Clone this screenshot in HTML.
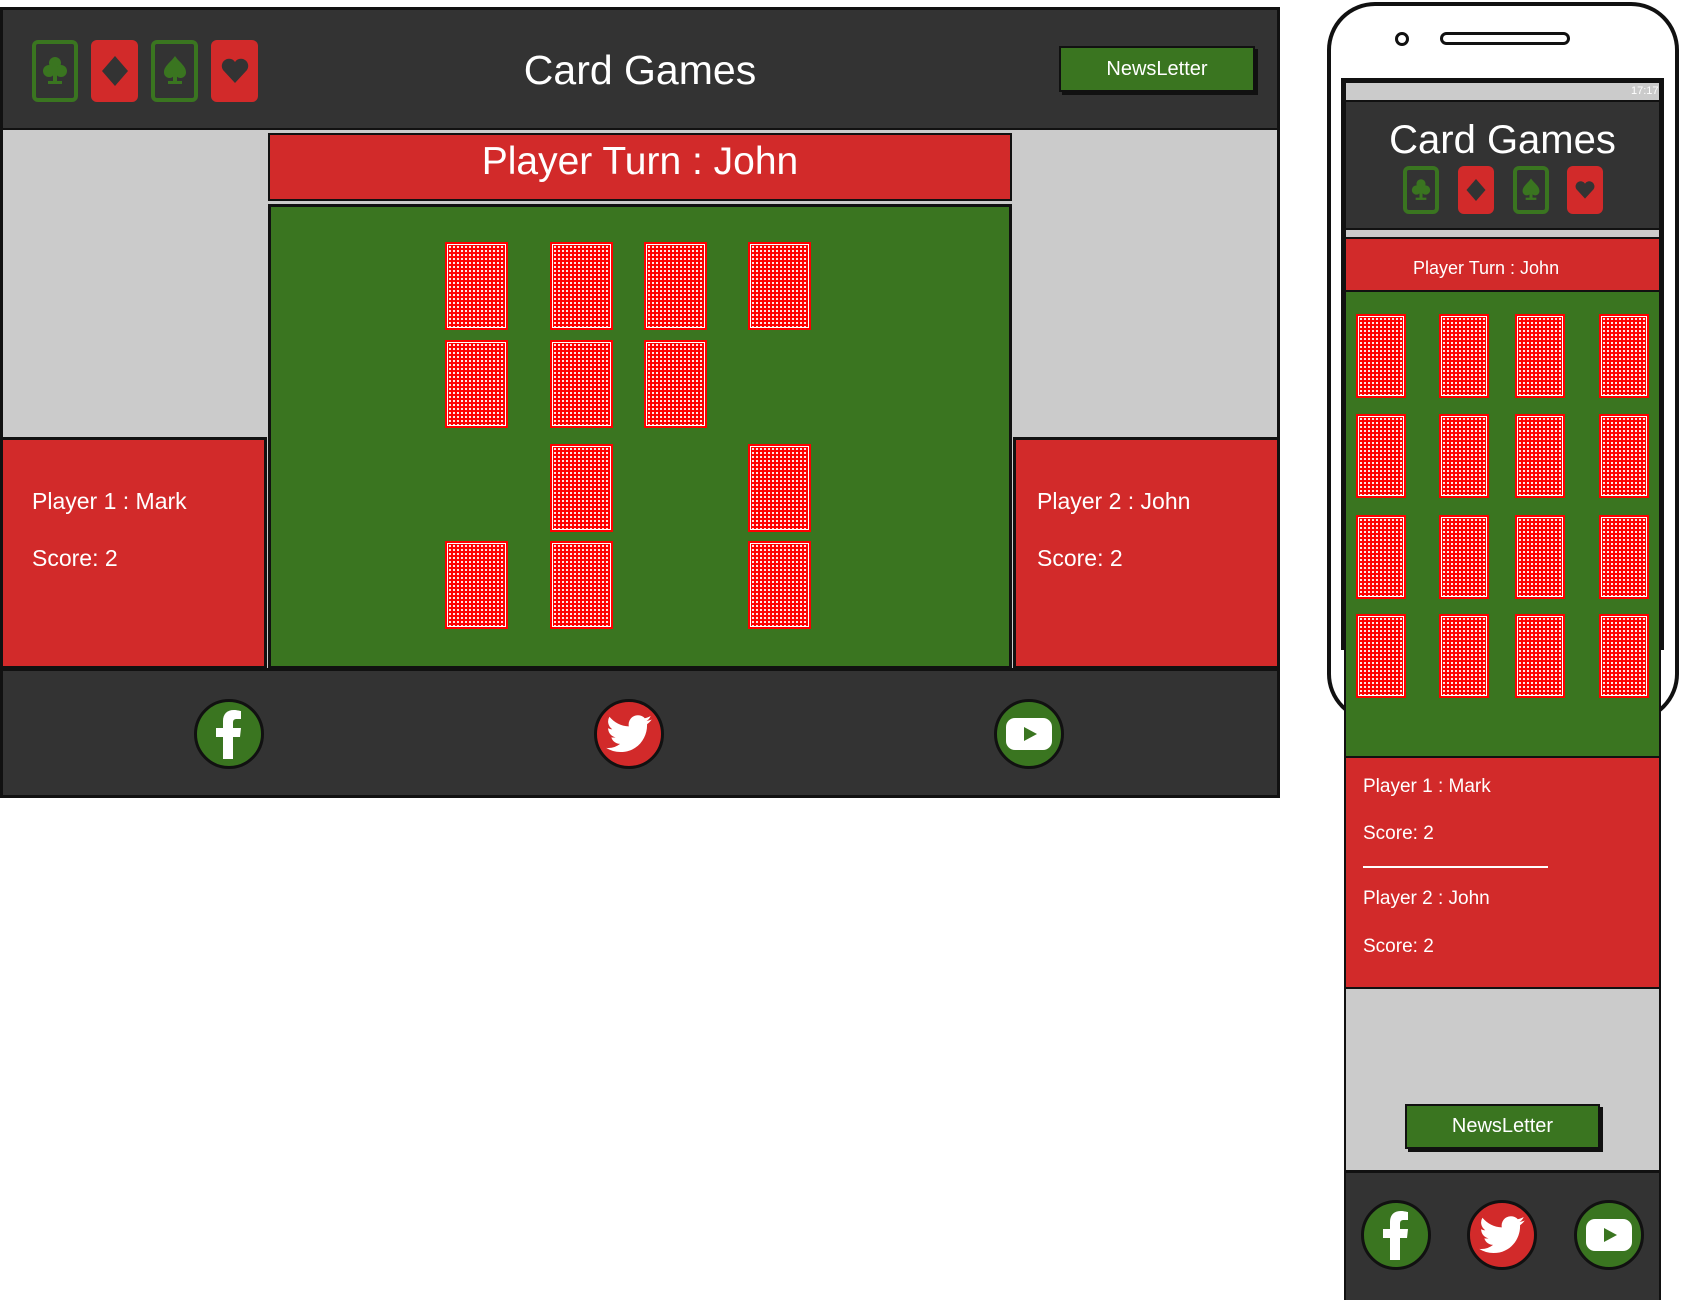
<!DOCTYPE html>
<html><head><meta charset="utf-8"><style>
*{margin:0;padding:0;box-sizing:border-box}
body{width:1681px;height:1300px;background:#fff;position:relative;overflow:hidden;font-family:"Liberation Sans",sans-serif}
.a{position:absolute}
.dark{background:#333}
.gray{background:#cbcbcb}
.red{background:#d22a2a}
.green{background:#3a7520}
.t{color:#fff;position:absolute;white-space:nowrap}
.card{position:absolute;background:#fff;padding:2px}
.card div{width:100%;height:100%;border:1px solid #fff;outline:2px solid #f00;background:radial-gradient(circle,#fff 0.9px,transparent 1.3px) 0 0/4px 4px,#f00}
.suit{position:absolute;border-radius:6px}
.suit.g{border:4px solid #3a7520}
.suit.r{background:#d22a2a}
.suit svg{position:absolute;left:50%;top:50%;transform:translate(-50%,-50%)}
.btn{position:absolute;background:#3a7520;border:2px solid #111;box-shadow:3px 3px 0 #111;color:#fff;text-align:center;font-size:20px}
.soc{position:absolute;width:70px;height:70px;border-radius:50%;border:3px solid #111}
.soc svg{position:absolute;left:50%;top:50%;transform:translate(-50%,-50%)}
</style></head><body>
<!-- Desktop -->
<div class="a dark" style="left:0;top:7px;width:1280px;height:124px;border:3px solid #111;border-bottom:3px solid #111"></div>
<div class="a gray" style="left:0;top:130px;width:1280px;height:540px;border-left:3px solid #111;border-right:3px solid #111"></div>
<div class="a dark" style="left:0;top:668px;width:1280px;height:130px;border:3px solid #111"></div>

<div class="suit g" style="left:32px;top:40px;width:46px;height:62px"><svg width="26" height="34" viewBox="0 0 26 34"><circle cx="13" cy="9" r="6" fill="#3a7520"/><circle cx="7" cy="17" r="6" fill="#3a7520"/><circle cx="19" cy="17" r="6" fill="#3a7520"/><rect x="11" y="12" width="4" height="16" fill="#3a7520"/><rect x="6" y="27" width="14" height="3" fill="#3a7520"/></svg></div>
<div class="suit r" style="left:91px;top:40px;width:47px;height:62px"><svg width="30" height="34" viewBox="0 0 30 34"><path d="M15 2L28 17L15 32L2 17Z" fill="#333"/></svg></div>
<div class="suit g" style="left:151px;top:40px;width:47px;height:62px"><svg width="26" height="34" viewBox="0 0 26 34"><path d="M13 2C9 8 2 12 2 18a5.5 5.5 0 0 0 11 1a5.5 5.5 0 0 0 11-1C24 12 17 8 13 2Z" fill="#3a7520"/><rect x="11" y="16" width="4" height="12" fill="#3a7520"/><rect x="6" y="27" width="14" height="3" fill="#3a7520"/></svg></div>
<div class="suit r" style="left:211px;top:40px;width:47px;height:62px"><svg width="30" height="28" viewBox="0 0 30 28"><path d="M15 26L3 13A7 7 0 0 1 15 5A7 7 0 0 1 27 13Z" fill="#333"/></svg></div>

<div class="t" style="left:440px;width:400px;text-align:center;top:47px;font-size:41px">Card Games</div>
<div class="btn" style="left:1059px;top:46px;width:196px;height:46px;line-height:42px">NewsLetter</div>

<div class="a red" style="left:268px;top:133px;width:744px;height:68px;border:2px solid #111"></div>
<div class="t" style="left:268px;width:744px;text-align:center;top:140px;font-size:39px">Player Turn : John</div>
<div class="a green" style="left:268px;top:204px;width:744px;height:465px;border:3px solid #111"></div>

<div class="a red" style="left:0;top:437px;width:267px;height:232px;border:3px solid #111"></div>
<div class="t" style="left:32px;top:488px;font-size:23px">Player 1 : Mark</div>
<div class="t" style="left:32px;top:545px;font-size:23px">Score: 2</div>
<div class="a red" style="left:1013px;top:437px;width:267px;height:232px;border:3px solid #111"></div>
<div class="t" style="left:1037px;top:488px;font-size:23px">Player 2 : John</div>
<div class="t" style="left:1037px;top:545px;font-size:23px">Score: 2</div>

<div id="dcards"></div>

<div class="soc green" style="left:194px;top:699px"><svg width="30" height="50" viewBox="0 0 30 50"><path d="M19 50V28h7l1-9h-8v-5c0-3 1-4 4-4h4V2c-1 0-4-1-7-1-7 0-11 4-11 11v7H2v9h7v22z" fill="#fff"/></svg></div>
<div class="soc red" style="left:594px;top:699px"><svg width="46" height="38" viewBox="0 0 24 20"><path d="M24 2.4c-.9.4-1.8.6-2.8.8 1-.6 1.800-1.6 2.2-2.7-1 .6-2 1-3.1 1.2A4.9 4.9 0 0 0 11.9 6C7.8 5.8 4.2 3.9 1.7.9a4.9 4.9 0 0 0 1.5 6.6c-.8 0-1.6-.2-2.2-.6 0 2.4 1.7 4.4 3.9 4.8-.7.2-1.5.2-2.2.1.6 2 2.4 3.4 4.6 3.4A9.9 9.9 0 0 1 0 17.3 14 14 0 0 0 7.5 19.5c9.1 0 14-7.5 14-14v-.6c1-.7 1.8-1.6 2.5-2.5z" fill="#fff"/></svg></div>
<div class="soc green" style="left:994px;top:699px"><svg width="46" height="32" viewBox="0 0 46 32"><rect x="0" y="0" width="46" height="32" rx="9" fill="#fff"/><path d="M18 9L31 16L18 23Z" fill="#3a7520"/></svg></div>

<!-- Phone -->
<div class="a" style="left:1327px;top:2px;width:352px;height:720px;border:4px solid #111;border-radius:48px;background:#fff"></div>
<div class="a" style="left:1395px;top:32px;width:14px;height:14px;border:3px solid #111;border-radius:50%"></div>
<div class="a" style="left:1440px;top:32px;width:130px;height:13px;border:3px solid #111;border-radius:8px"></div>
<div class="a" style="left:1341px;top:78px;width:323px;height:572px;background:#111"></div>
<div class="a" style="left:1344px;top:640px;width:317px;height:660px;background:#111"></div>
<div class="a gray" style="left:1346px;top:83px;width:313px;height:17px"></div>
<div class="t" style="left:1631px;top:85px;font-size:11px;color:#fff">17:17</div>
<div class="a dark" style="left:1346px;top:102px;width:313px;height:126px"></div>
<div class="t" style="left:1346px;width:313px;text-align:center;top:118px;font-size:40px">Card Games</div>
<div class="suit g" style="left:1403px;top:166px;width:36px;height:48px"><svg width="20" height="26" viewBox="0 0 26 34"><circle cx="13" cy="9" r="6" fill="#3a7520"/><circle cx="7" cy="17" r="6" fill="#3a7520"/><circle cx="19" cy="17" r="6" fill="#3a7520"/><rect x="11" y="12" width="4" height="16" fill="#3a7520"/><rect x="6" y="27" width="14" height="3" fill="#3a7520"/></svg></div>
<div class="suit r" style="left:1458px;top:166px;width:36px;height:48px"><svg width="22" height="26" viewBox="0 0 30 34"><path d="M15 2L28 17L15 32L2 17Z" fill="#333"/></svg></div>
<div class="suit g" style="left:1513px;top:166px;width:36px;height:48px"><svg width="20" height="26" viewBox="0 0 26 34"><path d="M13 2C9 8 2 12 2 18a5.5 5.5 0 0 0 11 1a5.5 5.5 0 0 0 11-1C24 12 17 8 13 2Z" fill="#3a7520"/><rect x="11" y="16" width="4" height="12" fill="#3a7520"/><rect x="6" y="27" width="14" height="3" fill="#3a7520"/></svg></div>
<div class="suit r" style="left:1567px;top:166px;width:36px;height:48px"><svg width="22" height="20" viewBox="0 0 30 28"><path d="M15 26L3 13A7 7 0 0 1 15 5A7 7 0 0 1 27 13Z" fill="#333"/></svg></div>
<div class="a gray" style="left:1346px;top:230px;width:313px;height:7px"></div>
<div class="a red" style="left:1346px;top:239px;width:313px;height:51px"></div>
<div class="t" style="left:1413px;top:258px;font-size:18px">Player Turn : John</div>
<div class="a green" style="left:1346px;top:292px;width:313px;height:464px"></div>
<div id="mcards"></div>
<div class="a red" style="left:1346px;top:758px;width:313px;height:229px"></div>
<div class="t" style="left:1363px;top:776px;font-size:19px">Player 1 : Mark</div>
<div class="t" style="left:1363px;top:823px;font-size:19px">Score: 2</div>
<div class="a" style="left:1363px;top:866px;width:185px;height:2px;background:#fff"></div>
<div class="t" style="left:1363px;top:888px;font-size:19px">Player 2 : John</div>
<div class="t" style="left:1363px;top:936px;font-size:19px">Score: 2</div>
<div class="a gray" style="left:1346px;top:989px;width:313px;height:181px"></div>
<div class="btn" style="left:1405px;top:1104px;width:195px;height:45px;line-height:41px">NewsLetter</div>
<div class="a dark" style="left:1346px;top:1173px;width:313px;height:127px"></div>
<div class="soc green" style="left:1361px;top:1200px"><svg width="30" height="50" viewBox="0 0 30 50"><path d="M19 50V28h7l1-9h-8v-5c0-3 1-4 4-4h4V2c-1 0-4-1-7-1-7 0-11 4-11 11v7H2v9h7v22z" fill="#fff"/></svg></div>
<div class="soc red" style="left:1467px;top:1200px"><svg width="46" height="38" viewBox="0 0 24 20"><path d="M24 2.4c-.9.4-1.8.6-2.8.8 1-.6 1.8-1.6 2.2-2.7-1 .6-2 1-3.1 1.2A4.9 4.9 0 0 0 11.9 6C7.8 5.8 4.2 3.9 1.7.9a4.9 4.9 0 0 0 1.5 6.6c-.8 0-1.6-.2-2.2-.6 0 2.4 1.7 4.4 3.9 4.8-.7.2-1.5.2-2.2.1.6 2 2.4 3.4 4.6 3.4A9.9 9.9 0 0 1 0 17.3 14 14 0 0 0 7.5 19.5c9.1 0 14-7.5 14-14v-.6c1-.7 1.8-1.6 2.5-2.5z" fill="#fff"/></svg></div>
<div class="soc green" style="left:1574px;top:1200px"><svg width="46" height="32" viewBox="0 0 46 32"><rect x="0" y="0" width="46" height="32" rx="9" fill="#fff"/><path d="M18 9L31 16L18 23Z" fill="#3a7520"/></svg></div>

<script>
var dx=[445,550,644,748],dy=[242,340,444,541],lay=[[0,1,2,3],[0,1,2],[1,3],[0,1,3]],h='';
lay.forEach(function(r,i){r.forEach(function(c){h+='<div class="card" style="left:'+dx[c]+'px;top:'+dy[i]+'px;width:63px;height:88px"><div></div></div>';});});
document.getElementById('dcards').innerHTML=h;
var mx=[1356,1439,1515,1599],my=[314,414,515,614],m='';
my.forEach(function(y){mx.forEach(function(x){m+='<div class="card" style="left:'+x+'px;top:'+y+'px;width:50px;height:84px"><div></div></div>';});});
document.getElementById('mcards').innerHTML=m;
</script>
</body></html>
